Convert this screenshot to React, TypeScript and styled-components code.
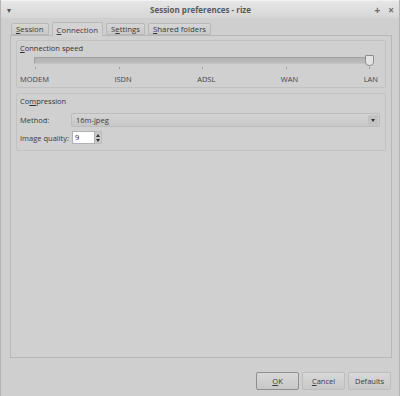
import React from 'react';
import styled, { createGlobalStyle } from 'styled-components';

const GlobalStyle = createGlobalStyle`
  html, body {
    margin: 0;
    padding: 0;
    background: #cfcfcf;
  }
  body {
    font-family: "Open Sans", "Noto Sans", sans-serif;
    font-size: 7.5px;
    color: #3c3c3c;
  }
`;

const speeds = ['MODEM', 'ISDN', 'ADSL', 'WAN', 'LAN'];

const App: React.FC = () => {
  return (
    <>
      <GlobalStyle />
      <Window>
        <TitleBar>
          <MenuArrow>▾</MenuArrow>
          <Title>Session preferences - rize</Title>
          <TitleButtons>
            <TitleButton>+</TitleButton>
            <TitleButton>×</TitleButton>
          </TitleButtons>
        </TitleBar>

        <Body>
          <TabBar>
            <Tab><u>S</u>ession</Tab>
            <Tab active><u>C</u>onnection</Tab>
            <Tab>S<u>e</u>ttings</Tab>
            <Tab><u>S</u>hared folders</Tab>
          </TabBar>

          <TabPanel>
            <Group>
              <GroupTitle><u>C</u>onnection speed</GroupTitle>
              <SliderArea>
                <Groove>
                  <Handle />
                </Groove>
                <Ticks>
                  {speeds.map((s) => (
                    <Tick key={s} />
                  ))}
                </Ticks>
              </SliderArea>
              <SpeedLabels>
                {speeds.map((s) => (
                  <span key={s}>{s}</span>
                ))}
              </SpeedLabels>
            </Group>

            <Group>
              <GroupTitle>Co<u>m</u>pression</GroupTitle>
              <FormGrid>
                <FieldLabel>Method:</FieldLabel>
                <Combo>
                  <span>16m-jpeg</span>
                  <ComboArrow />
                </Combo>
                <FieldLabel>Image quality:</FieldLabel>
                <SpinBox>
                  <SpinInput>9</SpinInput>
                  <SpinButtons>
                    <Arrow up />
                    <Arrow />
                  </SpinButtons>
                </SpinBox>
              </FormGrid>
            </Group>
          </TabPanel>

          <ButtonRow>
            <Button primary><u>O</u>K</Button>
            <Button><u>C</u>ancel</Button>
            <Button>Defaults</Button>
          </ButtonRow>
        </Body>
      </Window>
    </>
  );
};

const Window = styled.div`
  width: 400px;
  height: 396px;
  box-sizing: border-box;
  display: flex;
  flex-direction: column;
  background: #cfcfcf;
  border-left: 1px solid #b4b4b4;
  border-right: 1px solid #b4b4b4;
`;

const TitleBar = styled.div`
  height: 17px;
  display: flex;
  align-items: center;
  padding: 0 5px 0 6px;
  background: linear-gradient(#e6e6e6, #d6d6d6);
  border-top: 1px solid #f2f2f2;
`;

const MenuArrow = styled.span`
  width: 30px;
  font-size: 8px;
  color: #555;
`;

const Title = styled.span`
  flex: 1;
  text-align: center;
  font-weight: 700;
  font-size: 8px;
  color: #5a5a5a;
`;

const TitleButtons = styled.div`
  width: 30px;
  display: flex;
  justify-content: flex-end;
  gap: 8px;
`;

const TitleButton = styled.span`
  font-size: 10px;
  font-weight: 700;
  color: #6a6a6a;
`;

const Body = styled.div`
  flex: 1;
  display: flex;
  flex-direction: column;
  padding: 3px 7px 6px 9px;
`;

const TabBar = styled.div`
  display: flex;
  align-items: flex-end;
  height: 14px;
  padding-left: 1px;
  gap: 3px;
`;

const Tab = styled.div<{ active?: boolean }>`
  height: ${(p) => (p.active ? 14 : 12)}px;
  box-sizing: border-box;
  padding: 0 4px;
  display: flex;
  align-items: center;
  font-size: 7.8px;
  border: 1px solid #b8b8b8;
  border-bottom: ${(p) => (p.active ? 'none' : '1px solid #b8b8b8')};
  border-radius: 2px 2px 0 0;
  background: ${(p) => (p.active ? '#d3d3d3' : 'linear-gradient(#d6d6d6, #c9c9c9)')};
  color: #3a3a3a;
  margin-bottom: ${(p) => (p.active ? '-1px' : '0')};
  position: relative;
`;

const TabPanel = styled.div`
  flex: 1;
  border: 1px solid #b8b8b8;
  background: #d0d0d0;
  padding: 4px 5px;
  display: flex;
  flex-direction: column;
  gap: 5px;
`;

const Group = styled.div`
  border: 1px solid #c2c2c2;
  border-radius: 2px;
  padding: 2px 4px 3px 3px;
  display: flex;
  flex-direction: column;
`;

const GroupTitle = styled.div`
  height: 11px;
  line-height: 11px;
  color: #333;
`;

const SliderArea = styled.div`
  margin: 3px 11px 0 14px;
`;

const Groove = styled.div`
  position: relative;
  height: 5px;
  border: 1px solid #a0a0a0;
  border-bottom-color: #c4c4c4;
  background: linear-gradient(#b3b3b3, #bcbcbc);
  border-radius: 1px;
`;

const Handle = styled.div`
  position: absolute;
  right: -5px;
  top: -3px;
  width: 7px;
  height: 9px;
  background: #e4e4e4;
  border: 1px solid #8e8e8e;
  border-radius: 1px 1px 4px 4px;
`;

const Ticks = styled.div`
  display: flex;
  justify-content: space-between;
  height: 4px;
  margin-top: 1px;
  padding-left: 1px;
`;

const Tick = styled.div`
  width: 1px;
  height: 2px;
  margin-top: 2px;
  background: #9c9c9c;
`;

const SpeedLabels = styled.div`
  display: flex;
  justify-content: space-between;
  margin-top: 5px;
  padding-right: 3px;
  color: #444;
`;

const FormGrid = styled.div`
  display: grid;
  grid-template-columns: 51px 1fr;
  row-gap: 4px;
  align-items: center;
  margin: 6px 0 3px;
`;

const FieldLabel = styled.span`
  white-space: nowrap;
  color: #3a3a3a;
`;

const Combo = styled.div`
  height: 14px;
  box-sizing: border-box;
  display: flex;
  align-items: center;
  justify-content: space-between;
  padding: 0 1px 0 4px;
  border: 1px solid #bcbcbc;
  border-radius: 2px;
  background: linear-gradient(#d4d4d4, #c6c6c6);
  margin-right: 1px;
`;

const ComboArrow = styled.span`
  width: 10px;
  height: 11px;
  display: flex;
  align-items: center;
  justify-content: center;
  background: #c3c3c3;
  &::after {
    content: '';
    border-left: 2.5px solid transparent;
    border-right: 2.5px solid transparent;
    border-top: 3px solid #333;
  }
`;

const SpinBox = styled.div`
  display: flex;
  align-items: stretch;
  height: 13px;
  width: 30px;
  margin-left: 1px;
`;

const SpinInput = styled.div`
  width: 19px;
  background: #ffffff;
  border: 1px solid #b0b0b0;
  padding-left: 2px;
  line-height: 11px;
  color: #222;
`;

const SpinButtons = styled.div`
  flex: 1;
  display: flex;
  flex-direction: column;
  align-items: center;
  justify-content: center;
  gap: 2px;
  background: #c9c9c9;
  border: 1px solid #bcbcbc;
  border-left: none;
`;

const Arrow = styled.span<{ up?: boolean }>`
  width: 0;
  height: 0;
  border-left: 2.5px solid transparent;
  border-right: 2.5px solid transparent;
  ${(p) => (p.up ? 'border-bottom: 3px solid #333;' : 'border-top: 3px solid #333;')}
`;

const ButtonRow = styled.div`
  display: flex;
  justify-content: flex-end;
  gap: 3px;
  margin-top: 14px;
  padding-right: 1px;
`;

const Button = styled.button<{ primary?: boolean }>`
  width: 43px;
  height: 18px;
  font-family: "Open Sans", "Noto Sans", sans-serif;
  font-size: 7.5px;
  color: #3c3c3c;
  border: 1px solid ${(p) => (p.primary ? '#8f8f8f' : '#bdbdbd')};
  border-radius: 2px;
  background: linear-gradient(#d8d8d8, #c8c8c8);
  padding: 0;
`;

export default App;
